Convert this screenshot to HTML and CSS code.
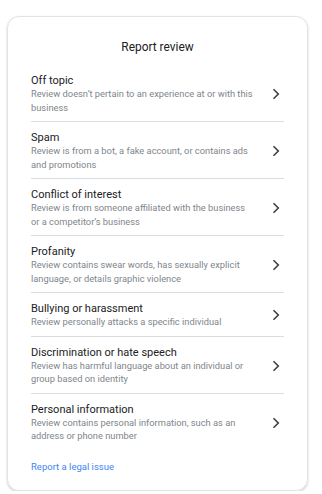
FILE: index.html
```html
<!DOCTYPE html>
<html lang="en">
<head>
<meta charset="utf-8">
<link rel="stylesheet" href="styles.css">
</head>
<body>
<div class="card">
  <h1 class="title">Report review</h1>
  <ul class="list">
    <li class="item">
      <div class="text">
        <div class="name">Off topic</div>
        <div class="desc">Review doesn’t pertain to an experience at or with this business</div>
      </div>
      <svg class="chev" width="8" height="12" viewBox="0 0 8 12"><path d="M1.5 1.2L6.3 6 1.5 10.8" fill="none" stroke="#3c4043" stroke-width="1.6"/></svg>
    </li>
    <li class="item">
      <div class="text">
        <div class="name">Spam</div>
        <div class="desc">Review is from a bot, a fake account, or contains ads and promotions</div>
      </div>
      <svg class="chev" width="8" height="12" viewBox="0 0 8 12"><path d="M1.5 1.2L6.3 6 1.5 10.8" fill="none" stroke="#3c4043" stroke-width="1.6"/></svg>
    </li>
    <li class="item">
      <div class="text">
        <div class="name">Conflict of interest</div>
        <div class="desc">Review is from someone affiliated with the business or a competitor’s business</div>
      </div>
      <svg class="chev" width="8" height="12" viewBox="0 0 8 12"><path d="M1.5 1.2L6.3 6 1.5 10.8" fill="none" stroke="#3c4043" stroke-width="1.6"/></svg>
    </li>
    <li class="item">
      <div class="text">
        <div class="name">Profanity</div>
        <div class="desc">Review contains swear words, has sexually explicit language, or details graphic violence</div>
      </div>
      <svg class="chev" width="8" height="12" viewBox="0 0 8 12"><path d="M1.5 1.2L6.3 6 1.5 10.8" fill="none" stroke="#3c4043" stroke-width="1.6"/></svg>
    </li>
    <li class="item">
      <div class="text">
        <div class="name">Bullying or harassment</div>
        <div class="desc">Review personally attacks a specific individual</div>
      </div>
      <svg class="chev" width="8" height="12" viewBox="0 0 8 12"><path d="M1.5 1.2L6.3 6 1.5 10.8" fill="none" stroke="#3c4043" stroke-width="1.6"/></svg>
    </li>
    <li class="item">
      <div class="text">
        <div class="name">Discrimination or hate speech</div>
        <div class="desc">Review has harmful language about an individual or group based on identity</div>
      </div>
      <svg class="chev" width="8" height="12" viewBox="0 0 8 12"><path d="M1.5 1.2L6.3 6 1.5 10.8" fill="none" stroke="#3c4043" stroke-width="1.6"/></svg>
    </li>
    <li class="item last">
      <div class="text">
        <div class="name">Personal information</div>
        <div class="desc">Review contains personal information, such as an address or phone number</div>
      </div>
      <svg class="chev" width="8" height="12" viewBox="0 0 8 12"><path d="M1.5 1.2L6.3 6 1.5 10.8" fill="none" stroke="#3c4043" stroke-width="1.6"/></svg>
    </li>
  </ul>
  <a class="legal" href="#">Report a legal issue</a>
</div>
</body>
</html>
```
FILE: styles.css
```css
* { box-sizing: border-box; }
html, body { margin: 0; padding: 0; background: #fff; }
body {
  padding: 16px 15px 0 7px;
  font-family: Roboto, "Liberation Sans", Arial, sans-serif;
}
.card {
  width: 301px;
  height: 475px;
  border: 1px solid #e3e3e3;
  border-radius: 12px;
  box-shadow: 0 1px 2px rgba(60,64,67,0.3);
  padding: 20px 23px 18px 23px;
  display: flex;
  flex-direction: column;
}
.title {
  margin: 0 0 8px 0;
  font-size: 11.9px;
  line-height: 20px;
  font-weight: 400;
  color: #202124;
  text-align: center;
}
.list { list-style: none; margin: 0; padding: 0; }
.item {
  display: flex;
  align-items: center;
  padding: 9px 0 7px 0;
  border-bottom: 1px solid #dadce0;
}
.item.last { border-bottom: none; }
.text { width: 222px; }
.name {
  font-size: 11px;
  line-height: 13px;
  color: #202124;
}
.desc {
  font-size: 9.3px;
  line-height: 13.5px;
  color: #80868b;
}
.chev { margin-left: 19px; flex: none; }
.legal {
  margin-top: 9px;
  font-size: 9.5px;
  line-height: 16px;
  color: #4285f4;
  text-decoration: none;
}
```
